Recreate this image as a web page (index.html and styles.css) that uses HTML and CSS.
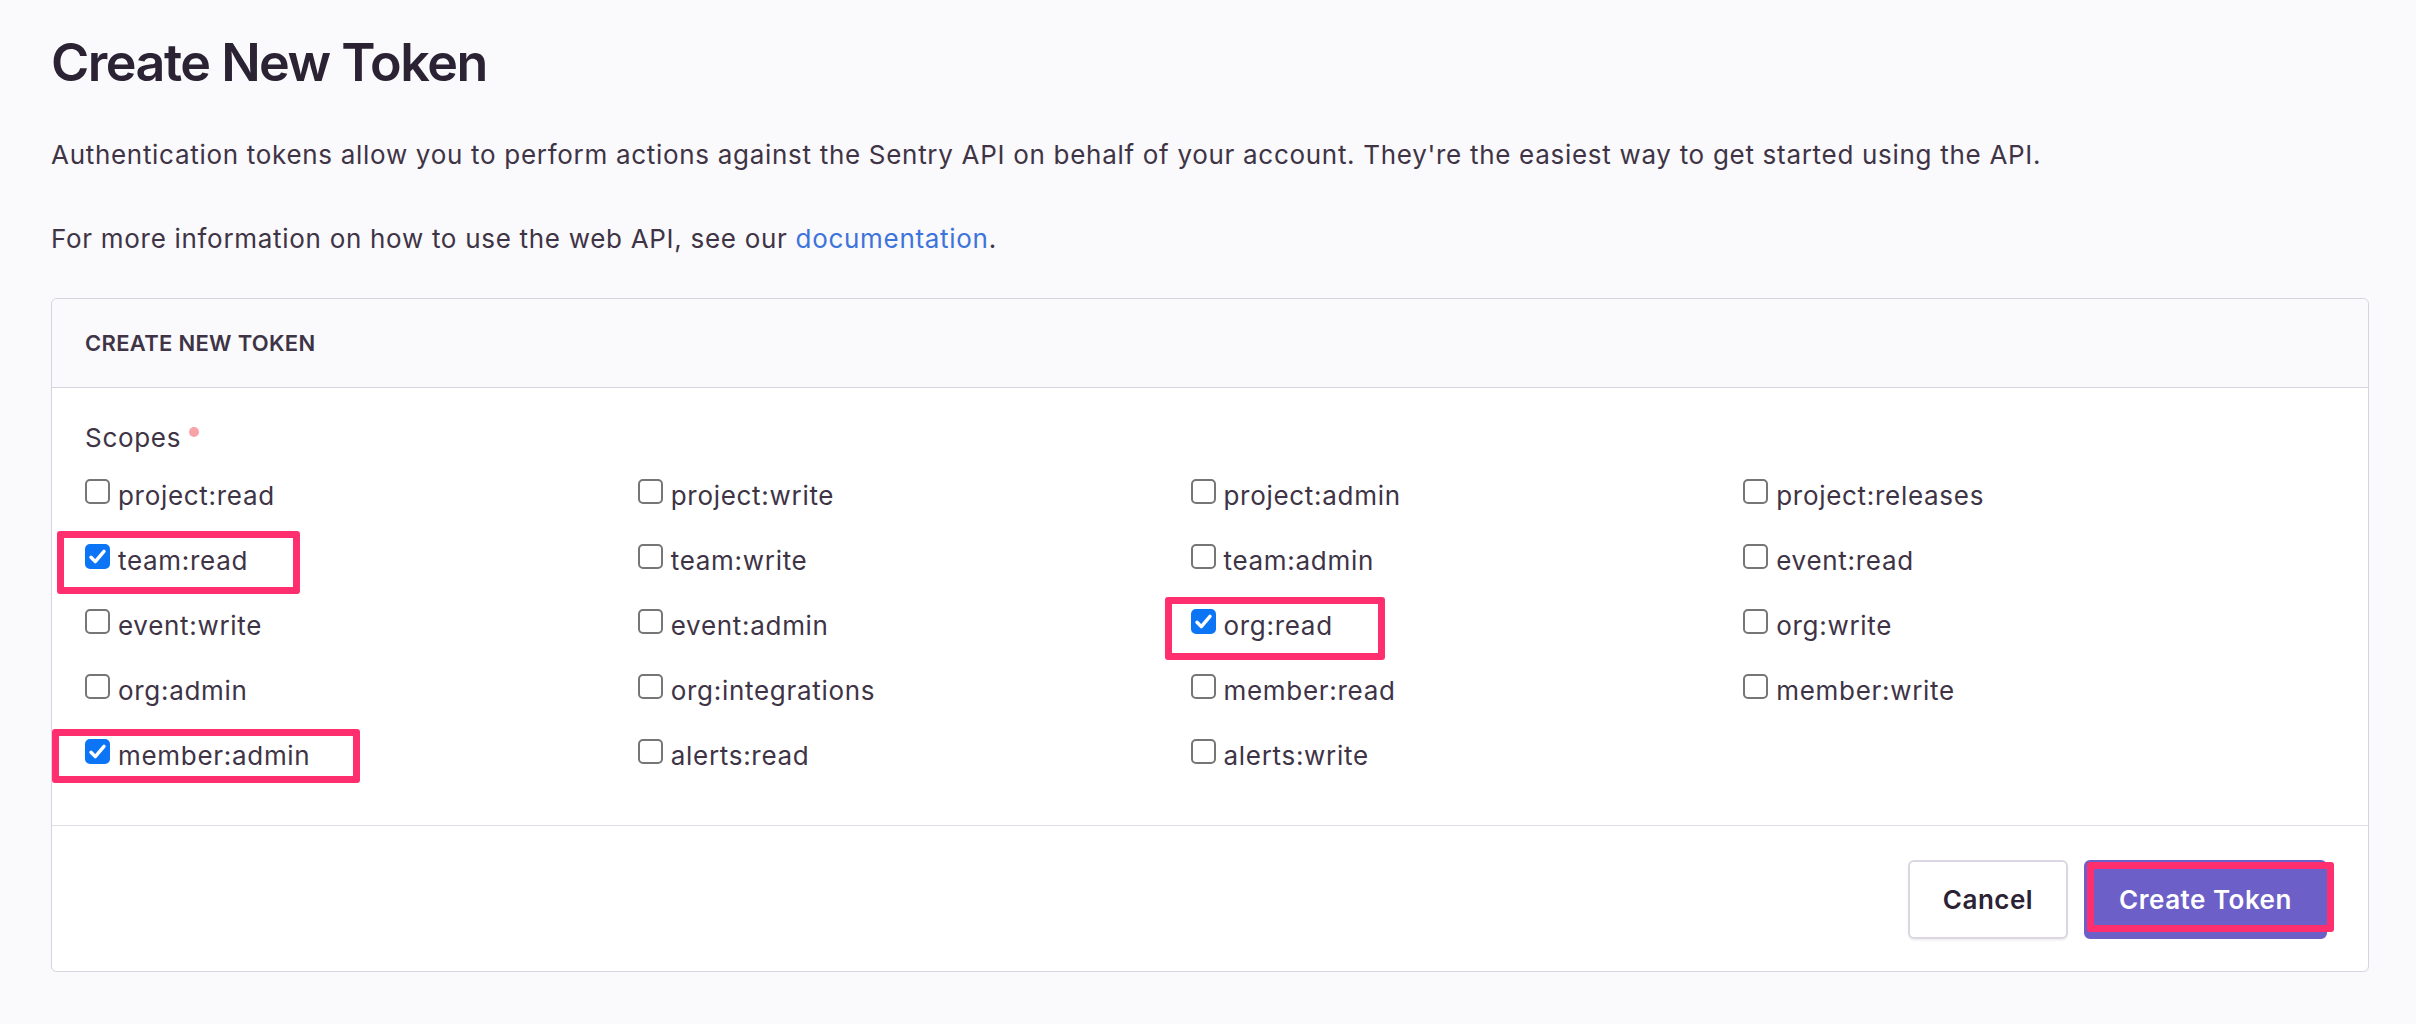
FILE: index.html
```html
<!DOCTYPE html>
<html lang="en">
<head>
<meta charset="utf-8">
<title>Create New Token</title>
<link rel="stylesheet" href="styles.css">
</head>
<body>
<main class="page">
  <h1 class="title">Create New Token</h1>
  <p class="lead">Authentication tokens allow you to perform actions against the Sentry API on behalf of your account. They're the easiest way to get started using the API.</p>
  <p class="lead">For more information on how to use the web API, see our <a class="link" href="#">documentation</a>.</p>

  <form class="panel">
    <div class="panel-header">Create New Token</div>
    <div class="panel-body">
      <div class="field-label">Scopes <span class="required"></span></div>
      <div class="scopes">
        <label class="scope"><span class="box"></span>project:read</label>
        <label class="scope"><span class="box"></span>project:write</label>
        <label class="scope"><span class="box"></span>project:admin</label>
        <label class="scope"><span class="box"></span>project:releases</label>

        <label class="scope marked mark-team"><span class="box checked"><svg viewBox="0 0 25 25"><path d="M6 13.2 L10.3 17.6 L19 7.4" /></svg></span>team:read</label>
        <label class="scope"><span class="box"></span>team:write</label>
        <label class="scope"><span class="box"></span>team:admin</label>
        <label class="scope"><span class="box"></span>event:read</label>

        <label class="scope"><span class="box"></span>event:write</label>
        <label class="scope"><span class="box"></span>event:admin</label>
        <label class="scope marked mark-org"><span class="box checked"><svg viewBox="0 0 25 25"><path d="M6 13.2 L10.3 17.6 L19 7.4" /></svg></span>org:read</label>
        <label class="scope"><span class="box"></span>org:write</label>

        <label class="scope"><span class="box"></span>org:admin</label>
        <label class="scope"><span class="box"></span>org:integrations</label>
        <label class="scope"><span class="box"></span>member:read</label>
        <label class="scope"><span class="box"></span>member:write</label>

        <label class="scope marked mark-member"><span class="box checked"><svg viewBox="0 0 25 25"><path d="M6 13.2 L10.3 17.6 L19 7.4" /></svg></span>member:admin</label>
        <label class="scope"><span class="box"></span>alerts:read</label>
        <label class="scope"><span class="box"></span>alerts:write</label>
      </div>
    </div>
    <div class="panel-footer">
      <button type="button" class="btn btn-default">Cancel</button>
      <button type="button" class="btn btn-primary marked-btn">Create Token</button>
    </div>
  </form>
</main>
</body>
</html>
```

FILE: styles.css
```css
*, *::before, *::after { box-sizing: border-box; }

html, body {
  margin: 0;
  padding: 0;
  background: #faf9fb;
}

body {
  font-family: Inter, Roboto, "Liberation Sans", sans-serif;
  color: #3e3446;
}

.page {
  padding: 28px 47px 0 51px;
}

.title {
  margin: 0;
  font-size: 52px;
  line-height: 70px;
  font-weight: 600;
  letter-spacing: -1.5px;
  color: #2b2233;
}

.lead {
  margin: 0;
  font-size: 26px;
  line-height: 40px;
  letter-spacing: 0.7px;
  color: #3e3446;
}

.title + .lead { margin-top: 37px; }
.lead + .lead { margin-top: 44px; }

.link {
  color: #3d74db;
  text-decoration: none;
}

.panel {
  margin-top: 39px;
  background: #fff;
  border: 1px solid #d9d4df;
  border-radius: 6px;
  box-shadow: 0 1px 2px rgba(43, 34, 51, 0.04);
}

.panel-header {
  background: #faf9fb;
  border-bottom: 1px solid #d9d4df;
  border-radius: 6px 6px 0 0;
  height: 89px;
  padding: 0 33px;
  display: flex;
  align-items: center;
  font-size: 22px;
  font-weight: 600;
  letter-spacing: 0.3px;
  text-transform: uppercase;
  color: #3e3446;
}

.panel-body {
  padding: 32px 72px 49px 33px;
  border-bottom: 1px solid #e2dee6;
}

.field-label {
  font-size: 26px;
  line-height: 36px;
  letter-spacing: 0.7px;
  color: #3e3446;
  display: flex;
  align-items: flex-start;
}

.required {
  display: inline-block;
  width: 10px;
  height: 10px;
  border-radius: 50%;
  background: #f7a3a8;
  margin: 7px 0 0 8px;
}

.scopes {
  margin-top: 20px;
  display: grid;
  grid-template-columns: repeat(4, 1fr);
  row-gap: 25px;
}

.scope {
  position: relative;
  display: block;
  font-size: 26px;
  line-height: 40px;
  height: 40px;
  letter-spacing: 0.7px;
  color: #3e3446;
  white-space: nowrap;
}

.box {
  display: inline-block;
  vertical-align: baseline;
  position: relative;
  width: 25px;
  height: 25px;
  margin: 0 8px 1px 0;
  border: 2px solid #767676;
  border-radius: 5px;
  background: #fff;
}

.box.checked {
  background: #0b75f6;
  border-color: #0b75f6;
}

.box svg {
  position: absolute;
  left: -2px;
  top: -2px;
  width: 25px;
  height: 25px;
}

.box svg path {
  fill: none;
  stroke: #fff;
  stroke-width: 3.4;
  stroke-linecap: round;
  stroke-linejoin: round;
}

.marked::before {
  content: "";
  position: absolute;
  border: 7px solid #ff2e6e;
  border-radius: 3px;
  pointer-events: none;
}

.mark-team::before { left: -28px; top: -10px; width: 243px; height: 63px; }
.mark-org::before { left: -26px; top: -9px; width: 220px; height: 63px; }
.mark-member::before { left: -33px; top: -7px; width: 308px; height: 54px; }

.panel-footer {
  display: flex;
  justify-content: flex-end;
  gap: 16px;
  padding: 34px 41px 32px 0;
}

.btn {
  height: 79px;
  border-radius: 6px;
  font-family: Inter, Roboto, "Liberation Sans", sans-serif;
  font-size: 26px;
  font-weight: 600;
  letter-spacing: 0.5px;
  cursor: pointer;
  padding: 0;
}

.btn-default {
  width: 160px;
  background: #fff;
  color: #2b2233;
  border: 2px solid #dcd6e2;
  box-shadow: 0 2px 2px rgba(43, 34, 51, 0.06);
}

.btn-primary {
  position: relative;
  width: 243px;
  background: #6c5fc7;
  color: #fff;
  border: 2px solid #6c5fc7;
}

.marked-btn::before {
  content: "";
  position: absolute;
  left: 1px;
  top: 0px;
  width: 247px;
  height: 70px;
  border: 7px solid #ff2e6e;
  border-radius: 3px;
}
```
